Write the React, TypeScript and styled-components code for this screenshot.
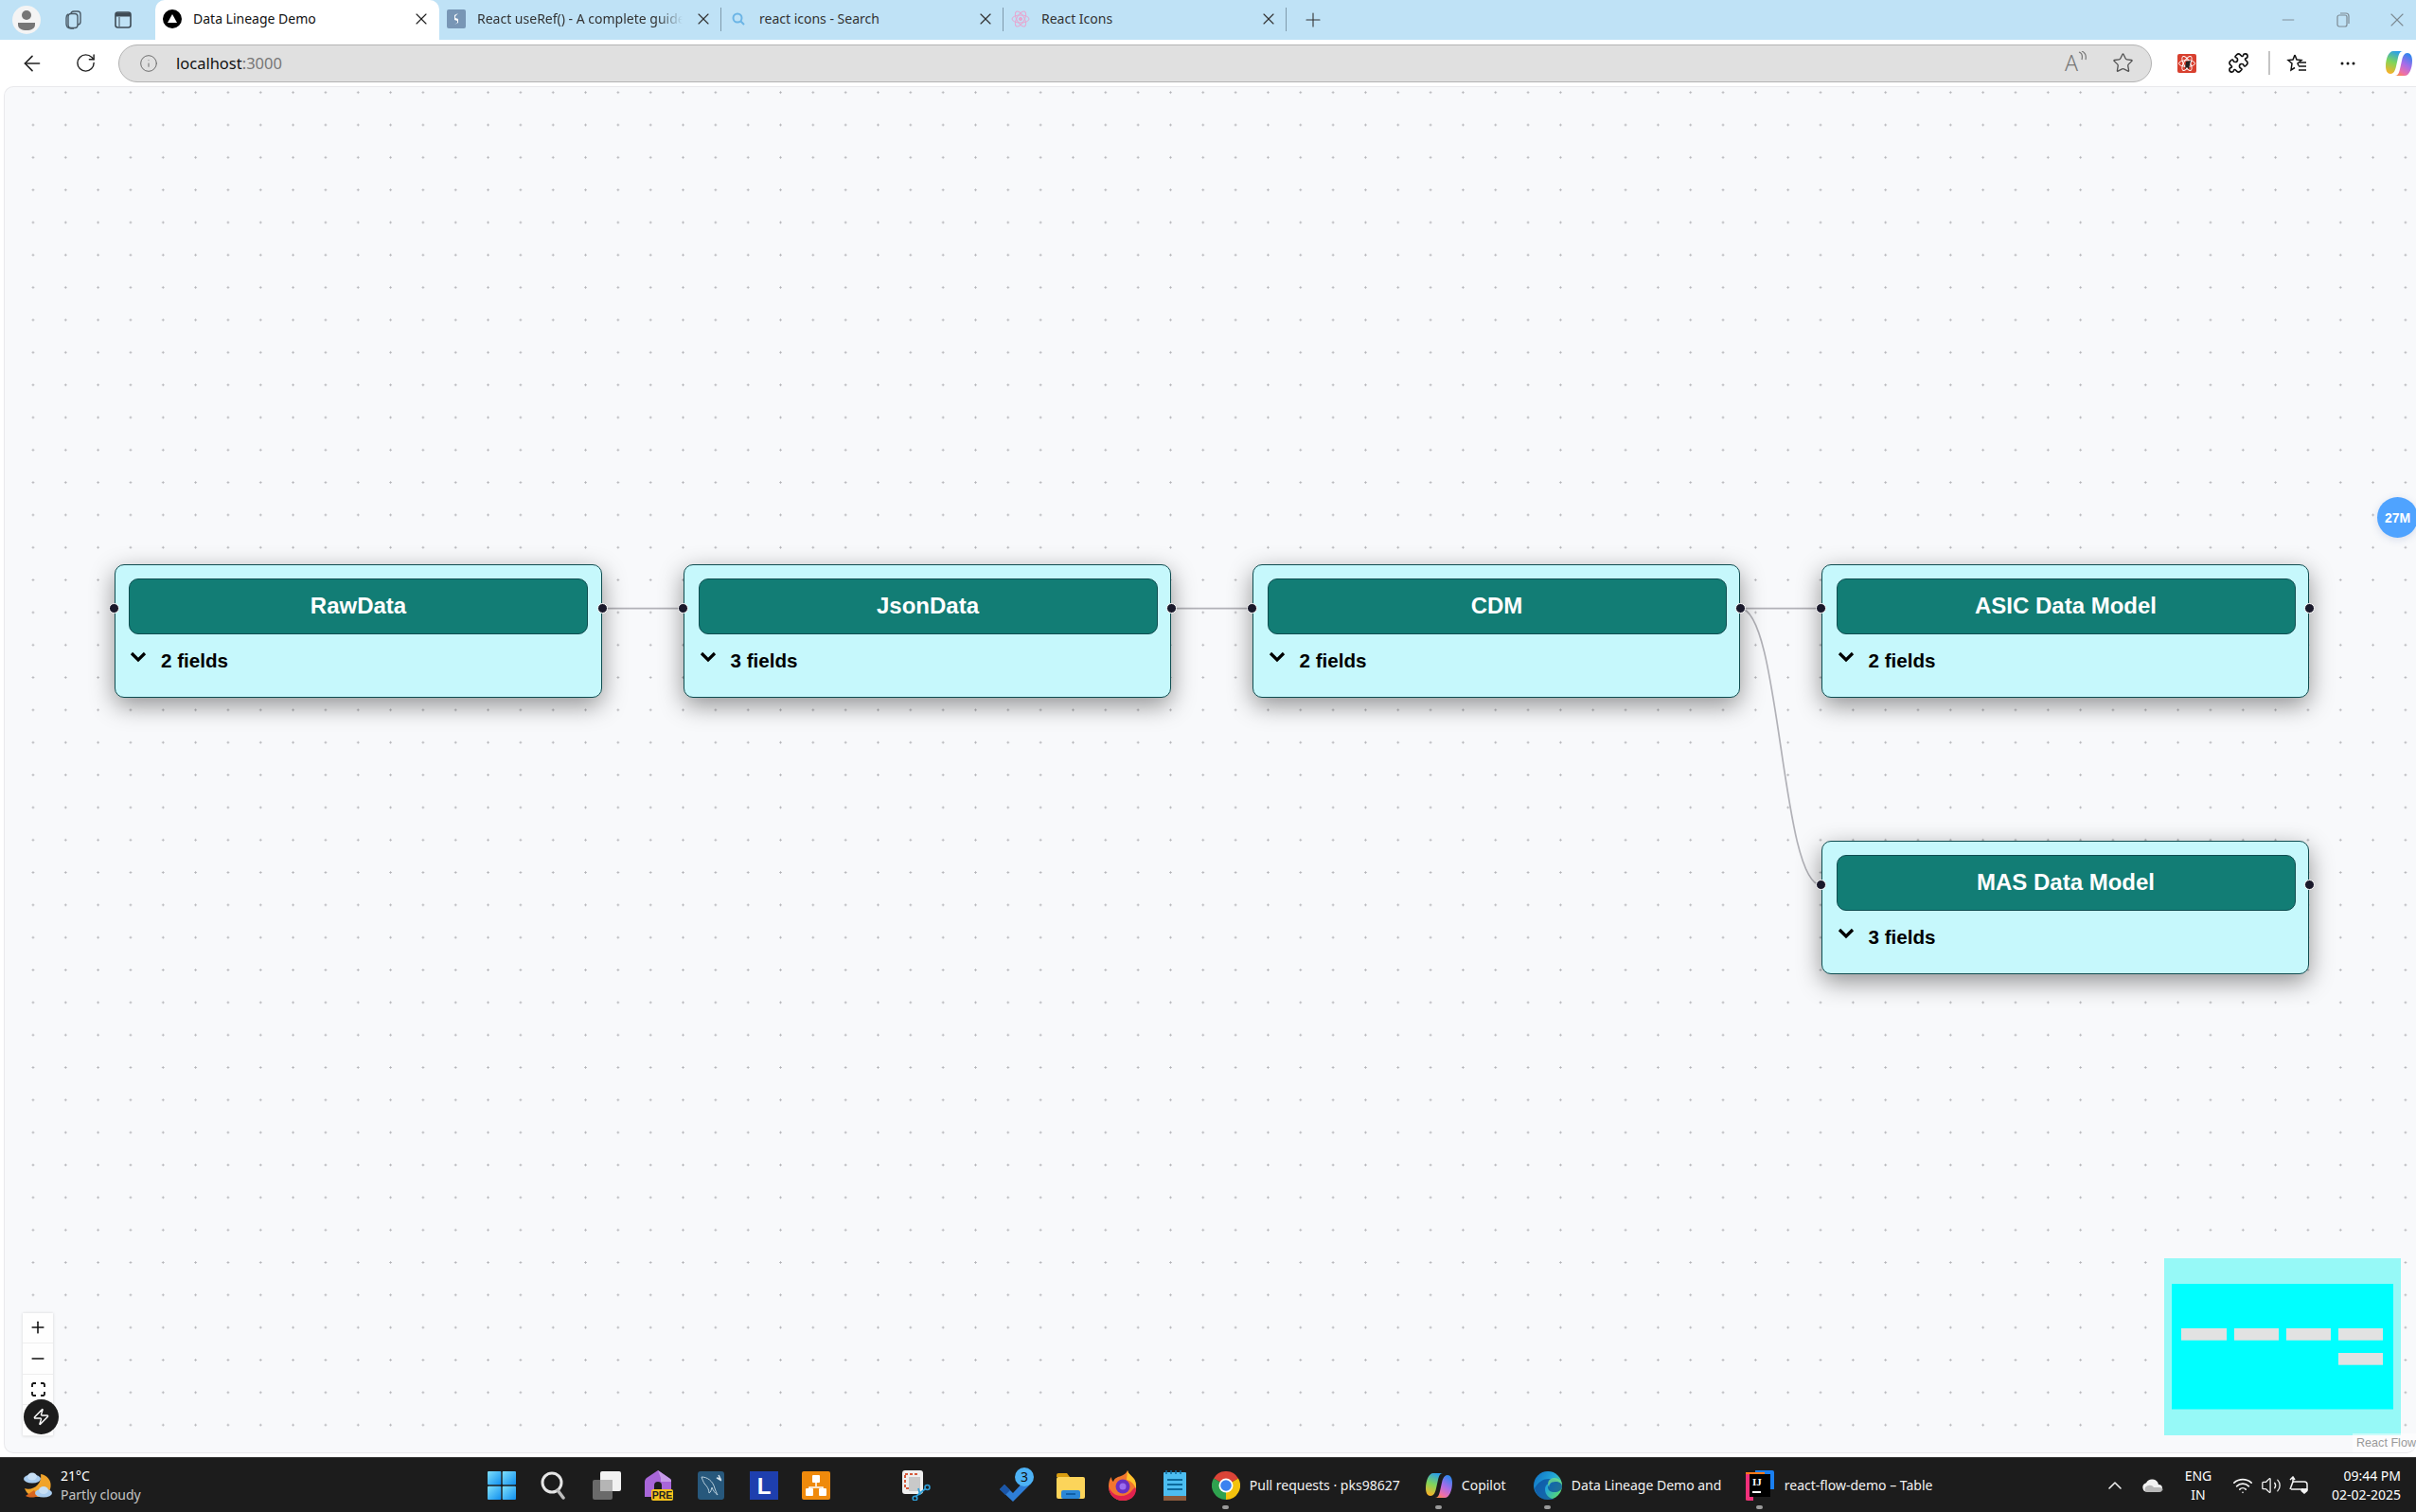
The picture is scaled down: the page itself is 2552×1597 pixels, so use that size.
import styled, { createGlobalStyle } from 'styled-components'
import { ArrowLeft, RotateCw, Info, X, Plus, Minus, Star, Zap, ChevronUp, Wifi, Volume2, Puzzle } from 'lucide-react'

const GlobalStyle = createGlobalStyle`
  html, body { margin: 0; padding: 0; background: #fff; }
  body { font-family: "Noto Sans", "Open Sans", sans-serif; }
`

const Page = styled.div`
  width: 2552px;
  height: 1597px;
  overflow: hidden;
  display: flex;
  flex-direction: column;
  background: #fff;
`

const TabStrip = styled.div`
  height: 42px;
  flex: none;
  display: flex;
  align-items: stretch;
  background: #bfe2f6;
  color: #333;
`

const StripIcons = styled.div`
  width: 164px;
  flex: none;
  display: grid;
  grid-template-columns: 30px 68px 38px;
  align-items: center;
  justify-items: center;
  padding-left: 13px;
  box-sizing: border-box;
`

const Avatar = styled.div`
  width: 30px;
  height: 30px;
  border-radius: 50%;
  background: #f4f4f4;
  display: flex;
  align-items: center;
  justify-content: center;
`

const Tab = styled.div<{ $active?: boolean; $w: number }>`
  width: ${(p) => p.$w}px;
  flex: none;
  box-sizing: border-box;
  display: flex;
  align-items: center;
  gap: 12px;
  padding: 0 9px 3px 8px;
  position: relative;
  font-size: 14px;
  color: ${(p) => (p.$active ? '#111' : '#333')};
  background: ${(p) => (p.$active ? '#fff' : 'transparent')};
  border-radius: ${(p) => (p.$active ? '10px 10px 0 0' : '0')};
`

const TabDivider = styled.span`
  position: absolute;
  right: 0;
  top: 8px;
  bottom: 9px;
  width: 1px;
  background: #7f9aab;
`

const TabIcon = styled.span`
  width: 20px;
  height: 20px;
  flex: none;
  display: flex;
  align-items: center;
  justify-content: center;
`

const TabTitle = styled.span<{ $fade?: boolean }>`
  flex: 1;
  min-width: 0;
  overflow: hidden;
  white-space: nowrap;
  ${(p) => p.$fade && 'mask-image: linear-gradient(to right, #000 88%, transparent 100%);'}
`

const NewTab = styled.div`
  width: 56px;
  flex: none;
  display: flex;
  align-items: center;
  justify-content: center;
`

const WindowButtons = styled.div`
  margin-left: auto;
  display: flex;
  align-items: center;
  gap: 17.5px;
  color: #7d8a93;
`

const WindowButton = styled.div`
  width: 40px;
  display: flex;
  justify-content: center;
`

const Toolbar = styled.div`
  height: 49px;
  flex: none;
  display: flex;
  align-items: center;
  padding: 0 0 0 14px;
  box-sizing: border-box;
  background: #fff;
  color: #222;
`

const NavGroup = styled.div`
  display: flex;
  align-items: center;
  gap: 16px;
`

const ToolButton = styled.div`
  width: 40px;
  height: 40px;
  flex: none;
  display: flex;
  align-items: center;
  justify-content: center;
`

const AddressBar = styled.div`
  margin-left: 15px;
  margin-right: 19px;
  width: 2148px;
  height: 40px;
  flex: none;
  box-sizing: border-box;
  display: flex;
  align-items: center;
  border: 1.5px solid #b3b3b3;
  border-radius: 20px;
  background: #e0e0e0;
  padding: 0 18px 0 21px;
  color: #6f6f6f;
`

const Url = styled.span`
  margin-left: 19px;
  font-size: 16.5px;
  color: #777;
  b {
    font-weight: 400;
    color: #111;
  }
`

const AddressEnd = styled.div`
  margin-left: auto;
  display: flex;
  align-items: center;
  gap: 26px;
`

const ReadAloud = styled.span`
  width: 24px;
  font-size: 23px;
  font-weight: 300;
  line-height: 1;
  color: #777;
  position: relative;
  svg {
    position: absolute;
    right: 0;
    top: -1px;
  }
`

const ToolCluster = styled.div`
  display: flex;
  align-items: center;
  gap: 18px;
`

const ToolSlot = styled.div`
  width: 36px;
  height: 36px;
  display: flex;
  align-items: center;
  justify-content: center;
`

const ToolSeparator = styled.div`
  width: 2px;
  height: 25px;
  background: #c4c4c4;
  margin: 0 -8px 0 -4px;
`

const Canvas = styled.div`
  flex: 1;
  position: relative;
  margin: 0 0 4px 4px;
  overflow: hidden;
  border-radius: 10px 0 10px 10px;
  border: 1px solid #e9e9ec;
  border-right: none;
  box-sizing: border-box;
  background-color: #f8f9fb;
  background-image: radial-gradient(circle, #b2b2b6 0.9px, transparent 1.3px);
  background-size: 34.33px 34.33px;
  background-position: 12.8px -11.5px;
`

const EdgeLayer = styled.svg`
  position: absolute;
  left: -1px;
  top: -1px;
  width: 2548px;
  height: 1444px;
  pointer-events: none;
`

const FlowNode = styled.div<{ $x: number; $y: number }>`
  position: absolute;
  left: ${(p) => p.$x}px;
  top: ${(p) => p.$y}px;
  width: 515px;
  height: 141px;
  box-sizing: border-box;
  padding: 13.5px 13.5px 13.5px 14.5px;
  background: #c6f8fc;
  border: 1.7px solid #0f4c50;
  border-radius: 10px;
  box-shadow: 0 8px 26px rgba(0, 0, 0, 0.42);
`

const NodeHeader = styled.div`
  height: 59px;
  box-sizing: border-box;
  display: flex;
  align-items: center;
  justify-content: center;
  background: #127d75;
  border: 1.7px solid #0f4c50;
  border-radius: 10px;
  color: #fff;
  font: 700 24px "Liberation Sans", Arial, sans-serif;
`

const FieldsRow = styled.div`
  display: flex;
  align-items: center;
  gap: 15px;
  margin-top: 15px;
  padding-left: 1px;
  color: #000;
  font: 700 20.6px/26px "Liberation Sans", Arial, sans-serif;
  svg {
    margin-top: -7px;
  }
`

const Handle = styled.span<{ $side: 'left' | 'right' }>`
  position: absolute;
  top: 40px;
  ${(p) => p.$side}: -7px;
  width: 11px;
  height: 11px;
  box-sizing: border-box;
  border-radius: 50%;
  background: #1a192b;
  border: 1.5px solid #fff;
`

const Controls = styled.div`
  position: absolute;
  left: 19px;
  bottom: 17px;
  width: 32px;
  display: flex;
  flex-direction: column;
  background: #fefefe;
  box-shadow: 0 0 3px rgba(0, 0, 0, 0.15);
`

const ControlButton = styled.div`
  height: 32.6px;
  box-sizing: border-box;
  display: flex;
  align-items: center;
  justify-content: center;
  border-bottom: 1px solid #eee;
  color: #111;
`

const DevButton = styled.div`
  position: absolute;
  left: 19.5px;
  bottom: 19.5px;
  width: 37px;
  height: 37px;
  border-radius: 50%;
  background: #1c1c1c;
  box-shadow: 0 0 0 1px rgba(255, 255, 255, 0.2);
  color: #fff;
  display: flex;
  align-items: center;
  justify-content: center;
`

const MiniMap = styled.svg`
  position: absolute;
  right: 16px;
  bottom: 18px;
  width: 250px;
  height: 187px;
`

const Attribution = styled.div`
  position: absolute;
  right: 0;
  bottom: 0;
  height: 20px;
  padding: 0 0 0 4px;
  background: rgba(255, 255, 255, 0.5);
  color: #999;
  font: 12.6px/20px "Liberation Sans", Arial, sans-serif;
`

const Badge = styled.div`
  position: absolute;
  right: -2px;
  top: 433px;
  width: 43px;
  height: 43px;
  border-radius: 50%;
  background: #4fa3ff;
  color: #fff;
  display: flex;
  align-items: center;
  justify-content: center;
  font: 700 14px "Liberation Sans", Arial, sans-serif;
  box-shadow: 0 2px 8px rgba(60, 90, 160, 0.18);
`

const Taskbar = styled.div`
  height: 58px;
  flex: none;
  display: flex;
  align-items: center;
  background: #1c1c1c;
  color: #fff;
  border-top: 1px solid #333;
  box-sizing: border-box;
`

const Weather = styled.div`
  width: 502.5px;
  flex: none;
  box-sizing: border-box;
  padding-left: 24px;
  display: flex;
  align-items: center;
  gap: 8px;
`

const WeatherText = styled.div`
  font-size: 14px;
  line-height: 20px;
  span {
    display: block;
    color: #c4c4c4;
  }
`

const Slot = styled.div`
  width: 55.3px;
  height: 40px;
  flex: none;
  position: relative;
  display: flex;
  align-items: center;
  justify-content: center;
`

const SlotGap = styled.div<{ $w: number }>`
  width: ${(p) => p.$w}px;
  flex: none;
`

const RunningApp = styled.div<{ $gap: number; $lead: number; $label: number }>`
  display: flex;
  align-items: center;
  flex: none;
  margin-left: ${(p) => p.$lead}px;
  gap: ${(p) => p.$gap}px;
  span {
    width: ${(p) => p.$label}px;
    overflow: hidden;
    white-space: nowrap;
    font-size: 14px;
    color: #f2f2f2;
  }
`

const AppIcon = styled.div`
  width: 30px;
  height: 40px;
  position: relative;
  display: flex;
  align-items: center;
  justify-content: center;
`

const Running = styled.i`
  position: absolute;
  left: 50%;
  bottom: -5px;
  width: 7px;
  height: 4px;
  margin-left: -3.5px;
  border-radius: 2px;
  background: #9a9a9a;
`

const Tray = styled.div`
  margin-left: auto;
  padding-right: 16px;
  display: flex;
  align-items: center;
`

const Lang = styled.div`
  width: 50px;
  margin-left: 12px;
  text-align: center;
  font-size: 14px;
  line-height: 20px;
`

const TrayIcons = styled.div`
  margin-left: 11px;
  display: flex;
  align-items: center;
  gap: 7.5px;
`

const Clock = styled.div`
  width: 90px;
  margin-left: 7px;
  text-align: right;
  font-size: 14px;
  line-height: 20px;
  white-space: nowrap;
`

const Chevron = () => (
  <svg width="18" height="12" viewBox="0 0 18 12">
    <path d="M2 2l7 7 7-7" fill="none" stroke="#000" strokeWidth="3.2" />
  </svg>
)

const nodes = [
  { id: 'raw', title: 'RawData', fields: 2, x: 115.5, y: 504 },
  { id: 'json', title: 'JsonData', fields: 3, x: 717, y: 504 },
  { id: 'cdm', title: 'CDM', fields: 2, x: 1318, y: 504 },
  { id: 'asic', title: 'ASIC Data Model', fields: 2, x: 1919, y: 504 },
  { id: 'mas', title: 'MAS Data Model', fields: 3, x: 1919, y: 796 },
]

const Logo = {
  Next: () => (
    <svg width="20" height="20" viewBox="0 0 20 20">
      <circle cx="10" cy="10" r="10" fill="#000" />
      <path d="M10 5l5 9H5z" fill="#fff" />
    </svg>
  ),
  Log: () => (
    <svg width="20" height="20" viewBox="0 0 20 20">
      <rect width="20" height="20" rx="2" fill="#7896b5" />
      <path d="M12 4L8 6v5l3 1v2l-3 2 4-2V10L9 9V7z" fill="#fff" />
    </svg>
  ),
  Atom: () => (
    <svg width="20" height="22" viewBox="0 0 20 22" fill="none" stroke="#e7a6d0" strokeWidth="1">
      <ellipse cx="10" cy="11" rx="9" ry="4" />
      <ellipse cx="10" cy="11" rx="9" ry="4" transform="rotate(60 10 11)" />
      <ellipse cx="10" cy="11" rx="9" ry="4" transform="rotate(120 10 11)" />
      <circle cx="10" cy="11" r="1.6" fill="#e7a6d0" />
    </svg>
  ),
  Mag: () => (
    <svg width="16" height="16" viewBox="0 0 16 16" fill="none" stroke="#6cb5e6" strokeWidth="2">
      <circle cx="7" cy="7" r="4.5" />
      <path d="M10.5 10.5L14 14" />
    </svg>
  ),
  Person: () => (
    <svg width="20" height="24" viewBox="0 0 20 24" fill="#767676">
      <circle cx="10" cy="7" r="5" />
      <path d="M1 15h18v2c0 4-4 6-9 6s-9-2-9-6z" />
    </svg>
  ),
  Collections: () => (
    <svg width="22" height="22" viewBox="0 0 22 22" fill="none" stroke="#4a5a66" strokeWidth="1.4">
      <rect x="9" y="2" width="10" height="14" rx="3" />
      <path d="M6 5c-2 1-2 2-2 4v6c0 3 2 5 5 5h3" />
      <rect x="6" y="4.5" width="10" height="15" rx="3" fill="#bfe2f6" />
    </svg>
  ),
  Sidebar: () => (
    <svg width="20" height="20" viewBox="0 0 20 20" fill="none" stroke="#3e4b55" strokeWidth="1.6">
      <rect x="2" y="2" width="16" height="16" rx="2.5" />
      <path d="M2 4.500h16" strokeWidth="4" />
      <path d="M6 7v10" strokeWidth="1" />
    </svg>
  ),
  Restore: () => (
    <svg width="14" height="16" viewBox="0 0 14 16" fill="none" stroke="#7d8a93" strokeWidth="1.2">
      <rect x="1" y="3" width="10" height="12" rx="2" />
      <path d="M4 1h6a3 3 0 0 1 3 3v8" />
    </svg>
  ),
  ExtRed: () => (
    <svg width="20" height="20" viewBox="0 0 20 20">
      <rect width="20" height="20" rx="2" fill="#d8402f" />
      <g fill="none" stroke="#fff" strokeWidth="0.9">
        <ellipse cx="10" cy="10" rx="8.5" ry="3.4" />
        <ellipse cx="10" cy="10" rx="8.5" ry="3.4" transform="rotate(60 10 10)" />
        <ellipse cx="10" cy="10" rx="8.5" ry="3.4" transform="rotate(120 10 10)" />
      </g>
      <path d="M9 8l5-1-2 9-2-2-2 2z" fill="#222" />
    </svg>
  ),
  FavList: () => (
    <svg width="22" height="22" viewBox="0 0 22 22" fill="none" stroke="#111" strokeWidth="1.5">
      <path d="M9 2l2 5 5 .5-4 3.5 1 2.5M9 2L7 7l-5 .5 4 3.5-1 7 4-2.5" />
      <path d="M14 10h7M13 14h8M13 18h8" />
    </svg>
  ),
  Copilot: ({ s = 28, id = 'tb' }: { s?: number; id?: string }) => (
    <svg width={s} height={s} viewBox="0 0 28 28">
      <defs>
        <linearGradient id={`${id}a`} x1="0.6" y1="0" x2="0.3" y2="1">
          <stop offset="0" stopColor="#2a9fea" />
          <stop offset="0.5" stopColor="#7fd65a" />
          <stop offset="1" stopColor="#f9b128" />
        </linearGradient>
        <linearGradient id={`${id}b`} x1="0.7" y1="0" x2="0.2" y2="1">
          <stop offset="0" stopColor="#2f86ee" />
          <stop offset="0.45" stopColor="#a86ce8" />
          <stop offset="0.8" stopColor="#ee6fa8" />
          <stop offset="1" stopColor="#f58a4e" />
        </linearGradient>
      </defs>
      <path d="M8 1h10c-3 0-4 3-5 7l-2 9c-1 5-3 8-6 8-3 0-5-3-5-8C0 9 3 1 8 1z" fill={`url(#${id}a)`} />
      <path d="M20 27H10c3 0 4-3 5-7l2-9c1-5 3-8 6-8 3 0 5 3 5 8 0 8-3 16-8 16z" fill={`url(#${id}b)`} />
    </svg>
  ),
  WeatherIcon: () => (
    <svg width="32" height="30" viewBox="0 0 32 30">
      <path d="M19 3a12 12 0 0 1-3 24C9 27 4 24 2 18c8 3 19-4 17-15z" fill="#f0a32a" />
      <path d="M3 26c4 2 9 2 13 0l-4-6z" fill="#d9661f" />
      <ellipse cx="10" cy="8" rx="9" ry="4.500" fill="#a9cdf0" />
      <ellipse cx="10" cy="5.500" rx="5" ry="4" fill="#c7dff5" />
      <ellipse cx="22" cy="23" rx="9" ry="4.500" fill="#a9cdf0" />
      <ellipse cx="22" cy="20" rx="5" ry="4" fill="#c7dff5" />
    </svg>
  ),
  Windows: () => (
    <svg width="30" height="30" viewBox="0 0 30 30">
      <defs>
        <linearGradient id="win" x1="0" y1="0" x2="1" y2="1">
          <stop offset="0" stopColor="#7fe0fb" />
          <stop offset="1" stopColor="#0f8fef" />
        </linearGradient>
      </defs>
      <rect x="0" y="0" width="14.300" height="14.300" rx="1" fill="url(#win)" />
      <rect x="15.700" y="0" width="14.300" height="14.300" rx="1" fill="url(#win)" />
      <rect x="0" y="15.700" width="14.300" height="14.300" rx="1" fill="url(#win)" />
      <rect x="15.700" y="15.700" width="14.300" height="14.300" rx="1" fill="url(#win)" />
    </svg>
  ),
  SearchBar: () => (
    <svg width="28" height="30" viewBox="0 0 28 30" fill="none">
      <circle cx="12" cy="12" r="10" stroke="#e6e6e6" strokeWidth="3" />
      <path d="M18 20l6 8" stroke="#bdbdbd" strokeWidth="3.500" strokeLinecap="round" />
    </svg>
  ),
  TaskView: () => (
    <svg width="30" height="30" viewBox="0 0 30 30">
      <rect x="0" y="9" width="21" height="21" rx="2" fill="#6a6a6a" />
      <rect x="8" y="0" width="22" height="21" rx="2" fill="#f2f2f2" />
      <rect x="8" y="9" width="13" height="12" fill="#b5b5b5" />
    </svg>
  ),
  Pre: () => (
    <svg width="30" height="32" viewBox="0 0 30 32">
      <path d="M14 0l13 9c1 1 1 2 1 3v16H0V12c0-2 1-3 2-4z" fill="#a866d8" />
      <path d="M14 0l13 9c1 1 1 2 1 3H17V8z" fill="#c79be8" />
      <path d="M10 22v-6a4 4 0 0 1 8 0v6z" fill="#1c1c1c" />
      <rect x="7" y="20" width="23" height="12" rx="2" fill="#f6c21c" />
      <text x="18.500" y="30" textAnchor="middle" fontSize="10.500" fontWeight="700" fontFamily="Liberation Sans" fill="#222">PRE</text>
    </svg>
  ),
  Workbench: () => (
    <svg width="28" height="30" viewBox="0 0 28 30">
      <rect width="28" height="30" rx="3" fill="#27587c" />
      <path d="M4 6c6 0 12 4 14 12 1 3 2 5 3 7-3-2-5-5-6-8-1 3-1 5-3 6 0-4-2-7-5-10-1-2-2-4-3-7z" fill="none" stroke="#b9cfdc" strokeWidth="1" />
      <path d="M22 4l2 4-4-1 5 3" fill="none" stroke="#d8e5ee" strokeWidth="1.400" />
    </svg>
  ),
  LApp: () => (
    <svg width="30" height="30" viewBox="0 0 30 30">
      <rect width="30" height="30" fill="#1e3fae" />
      <text x="15" y="24" textAnchor="middle" fontSize="24" fontWeight="700" fontFamily="Liberation Sans" fill="#fff">L</text>
    </svg>
  ),
  Drawio: () => (
    <svg width="30" height="30" viewBox="0 0 30 30">
      <rect width="30" height="30" rx="2" fill="#ef8a0c" />
      <path d="M15 10v6M8 21v-4h14v4" fill="none" stroke="#fff" strokeWidth="1.500" />
      <rect x="11" y="4" width="8" height="8" rx="1" fill="#fff" />
      <rect x="4" y="18" width="8" height="8" rx="1" fill="#fff" />
      <rect x="18" y="18" width="8" height="8" rx="1" fill="#fff" />
    </svg>
  ),
  Snip: () => (
    <svg width="32" height="32" viewBox="0 0 32 32">
      <rect x="2" y="0" width="22" height="25" rx="3" fill="#efefef" />
      <rect x="5" y="4" width="12" height="15" fill="none" stroke="#d65a3c" strokeWidth="2" strokeDasharray="3 2" />
      <rect x="9" y="7" width="12" height="15" fill="#c9c9c9" />
      <path d="M27 19L16 28" stroke="#2f9fd8" strokeWidth="1.800" />
      <path d="M19 19l2 7" stroke="#2f9fd8" strokeWidth="1.800" />
      <circle cx="28.500" cy="18" r="2.500" fill="none" stroke="#2f9fd8" strokeWidth="1.600" />
      <circle cx="15.500" cy="29.500" r="2.300" fill="none" stroke="#2f9fd8" strokeWidth="1.600" />
    </svg>
  ),
  Todo: () => (
    <svg width="38" height="38" viewBox="0 0 38 38">
      <path d="M0 23l5-5 9 9 14-15 5 5-19 19z" fill="#2e7ed8" />
      <path d="M0 23l5-5 6 6-5 5z" fill="#1b56a8" />
      <circle cx="26" cy="10" r="10" fill="#4db2f5" />
      <text x="26" y="15" textAnchor="middle" fontSize="14" fontFamily="Noto Sans" fill="#111">3</text>
    </svg>
  ),
  Folder: () => (
    <svg width="30" height="28" viewBox="0 0 30 28">
      <path d="M0 3a2 2 0 0 1 2-2h9l3 4H0z" fill="#d99d10" />
      <rect x="0" y="5" width="30" height="23" rx="2" fill="#fcd45a" />
      <rect x="5" y="19" width="20" height="9" rx="2" fill="#2b87d8" />
      <rect x="10" y="22" width="10" height="2" fill="#0f5fa8" />
    </svg>
  ),
  Firefox: () => (
    <svg width="30" height="32" viewBox="0 0 30 32">
      <path d="M20 0c1 5 6 6 8 11 3 8 0 21-13 21C6 32 0 25 0 17 0 13 1 9 3 7c0 3 1 4 2 5 1-4 5-5 8-6 3-1 6-3 7-6z" fill="#f2762e" />
      <path d="M20 0c1 5 6 6 8 11 1 3 1 6 1 8-3-6-6-8-10-9z" fill="#ffc52c" />
      <path d="M15 32C6 32 0 25 0 17c2 6 7 10 13 10 5 0 9-2 12-6 3-3 3-4 4 0-1 7-6 11-14 11z" fill="#e0224e" />
      <circle cx="15" cy="17" r="7.500" fill="#6a2fc2" />
      <circle cx="15" cy="17" r="3.500" fill="#9b6cf0" />
    </svg>
  ),
  Notepad: () => (
    <svg width="24" height="32" viewBox="0 0 24 32">
      <rect y="2" width="24" height="27" rx="1" fill="#4cbdf0" />
      <rect y="27" width="24" height="5" fill="#8a5a3c" />
      <path d="M4 10h16M4 15h16M4 20h16" stroke="#0d6a9c" strokeWidth="2" />
      <path d="M3 0v4M8 0v4M13 0v4M18 0v4" stroke="#0d6a9c" strokeWidth="1.500" />
    </svg>
  ),
  Chrome: () => (
    <svg width="30" height="30" viewBox="0 0 30 30">
      <path d="M15 15L2 7.500A15 15 0 0 1 28 7.500z" fill="#db4437" />
      <path d="M15 15L28 7.500A15 15 0 0 1 15 30z" fill="#f4c20d" />
      <path d="M15 15L15 30A15 15 0 0 1 2 7.500z" fill="#2fa24f" />
      <circle cx="15" cy="15" r="7.500" fill="#fff" />
      <circle cx="15" cy="15" r="5.800" fill="#3b82f0" />
    </svg>
  ),
  Edge: () => (
    <svg width="30" height="30" viewBox="0 0 30 30">
      <defs>
        <linearGradient id="edgeg" x1="0" y1="0" x2="1" y2="0.600">
          <stop offset="0" stopColor="#0f6cc4" />
          <stop offset="0.600" stopColor="#22a7d8" />
          <stop offset="1" stopColor="#55d67a" />
        </linearGradient>
      </defs>
      <circle cx="15" cy="15" r="15" fill="url(#edgeg)" />
      <path d="M30 16c0 4-4 6-8 6-4 0-7-2-7-5 0-2 2-4 4-4-3-1-7 1-7 6 0 6 5 11 11 10-3 1-7 2-11 1C7 29 2 24 1 18c4-7 9-10 15-10 8 0 14 3 14 8z" fill="#0e4f9e" opacity="0.75" />
      <path d="M30 15c0-2-3-4-7-4-5 0-8 3-6 6-4-4-1-10 5-10 4 0 8 3 8 8z" fill="#6fe08e" opacity="0.8" />
    </svg>
  ),
  Idea: () => (
    <svg width="30" height="32" viewBox="0 0 30 32">
      <path d="M10 0h18a2 2 0 0 1 2 2v18H10z" fill="#1a7ff0" />
      <path d="M0 2h20v24H4l-4 6z" fill="#ff7a1a" />
      <path d="M0 4h8v28H2a2 2 0 0 1-2-2z" fill="#f0307a" />
      <rect x="4" y="4" width="22" height="24" fill="#000" />
      <text x="7" y="16" fontSize="11" fontWeight="700" fontFamily="Liberation Serif" fill="#fff">IJ</text>
      <rect x="7" y="22" width="9" height="2" fill="#fff" />
    </svg>
  ),
  Cloud: () => (
    <svg width="22" height="14" viewBox="0 0 22 14">
      <path d="M5 14a5 5 0 0 1-1-9.800 7 7 0 0 1 13 1.800 4 4 0 0 1 0 8z" fill="#f2f2f2" />
      <path d="M3 9c3-3 7-3 9 0l6 0c2 0 3 1 4 2-1 2-2 3-4 3H5c-2 0-3-2-2-5z" fill="#9f9f9f" opacity="0.7" />
    </svg>
  ),
  Battery: () => (
    <svg width="22" height="20" viewBox="0 0 22 20" fill="none" stroke="#f4f4f4" strokeWidth="1.500">
      <path d="M5 6h12a3 3 0 0 1 3 3v5H3" />
      <path d="M2 14l3-8" />
      <path d="M5 1v6M2 4l3-3 2 3" />
      <path d="M17 19l-3.500-3a2 2 0 0 1 3.500-2 2 2 0 0 1 3.500 2z" fill="#f4f4f4" stroke="none" />
    </svg>
  ),
}

const FitIcon = () => (
  <svg width="15" height="15" viewBox="0 0 15 15" fill="none" stroke="#111" strokeWidth="1.8">
    <path d="M1 5V2.500A1.500 1.500 0 0 1 2.500 1H5M10 1h2.500A1.500 1.500 0 0 1 14 2.500V5M14 10v2.500a1.500 1.500 0 0 1-1.500 1.500H10M5 14H2.500A1.500 1.500 0 0 1 1 12.500V10" />
  </svg>
)

export default function App() {
  return (
    <Page>
      <GlobalStyle />
      <TabStrip>
        <StripIcons>
          <Avatar>
            <Logo.Person />
          </Avatar>
          <Logo.Collections />
          <Logo.Sidebar />
        </StripIcons>
        <Tab $active $w={300}>
          <TabIcon><Logo.Next /></TabIcon>
          <TabTitle>Data Lineage Demo</TabTitle>
          <X size={20} strokeWidth={1.4} color="#222" />
        </Tab>
        <Tab $w={298}>
          <TabIcon><Logo.Log /></TabIcon>
          <TabTitle $fade>React useRef() - A complete guide</TabTitle>
          <X size={20} strokeWidth={1.4} color="#333" />
          <TabDivider />
        </Tab>
        <Tab $w={298}>
          <TabIcon><Logo.Mag /></TabIcon>
          <TabTitle>react icons - Search</TabTitle>
          <X size={20} strokeWidth={1.4} color="#333" />
          <TabDivider />
        </Tab>
        <Tab $w={299}>
          <TabIcon><Logo.Atom /></TabIcon>
          <TabTitle>React Icons</TabTitle>
          <X size={20} strokeWidth={1.4} color="#333" />
          <TabDivider />
        </Tab>
        <NewTab><Plus size={24} strokeWidth={1.1} color="#333" /></NewTab>
        <WindowButtons>
          <WindowButton><Minus size={20} strokeWidth={1.1} /></WindowButton>
          <WindowButton><Logo.Restore /></WindowButton>
          <WindowButton><X size={24} strokeWidth={1.1} /></WindowButton>
        </WindowButtons>
      </TabStrip>
      <Toolbar>
        <NavGroup>
          <ToolButton><ArrowLeft size={26} strokeWidth={1.5} /></ToolButton>
          <ToolButton><RotateCw size={23} strokeWidth={1.5} /></ToolButton>
        </NavGroup>
        <AddressBar>
          <Info size={20} strokeWidth={1.2} />
          <Url><b>localhost</b>:3000</Url>
          <AddressEnd>
            <ReadAloud>
              A
              <svg width="10" height="12" viewBox="0 0 10 12" fill="none" stroke="#777" strokeWidth="1.2">
                <path d="M1 1c3 1 4 4 3 8M4 0c4 2 5 5 4 9" />
              </svg>
            </ReadAloud>
            <Star size={23} strokeWidth={1.4} color="#555" />
          </AddressEnd>
        </AddressBar>
        <ToolCluster>
          <ToolSlot><Logo.ExtRed /></ToolSlot>
          <ToolSlot><Puzzle size={23} strokeWidth={1.7} color="#111" /></ToolSlot>
          <ToolSeparator />
          <ToolSlot><Logo.FavList /></ToolSlot>
          <ToolSlot>
            <svg width="16" height="4" viewBox="0 0 16 4" fill="#111">
              <circle cx="2" cy="2" r="1.500" /><circle cx="8" cy="2" r="1.500" /><circle cx="14" cy="2" r="1.500" />
            </svg>
          </ToolSlot>
          <ToolSlot><Logo.Copilot /></ToolSlot>
        </ToolCluster>
      </Toolbar>
      <Canvas>
        <EdgeLayer viewBox="4 91 2548 1444">
          <g fill="none" stroke="#b1b1b7" strokeWidth="1.7">
            <path d="M636 642.700L723 642.700" />
            <path d="M1237 642.700L1324 642.700" />
            <path d="M1838 642.700L1924 642.700" />
            <path d="M1838 642.700C1881 642.700 1881 935 1924 935" />
          </g>
        </EdgeLayer>
        {nodes.map((n) => (
          <FlowNode key={n.id} $x={n.x} $y={n.y}>
            <Handle $side="left" />
            <NodeHeader>{n.title}</NodeHeader>
            <FieldsRow>
              <Chevron />
              {n.fields} fields
            </FieldsRow>
            <Handle $side="right" />
          </FlowNode>
        ))}
        <Controls>
          <ControlButton><Plus size={20} strokeWidth={1.9} /></ControlButton>
          <ControlButton><Minus size={20} strokeWidth={1.9} /></ControlButton>
          <ControlButton><FitIcon /></ControlButton>
          <ControlButton />
        </Controls>
        <DevButton><Zap size={19} strokeWidth={1.8} /></DevButton>
        <MiniMap viewBox="0 0 250 187">
          <rect width="250" height="187" fill="#96f9f7" />
          <rect x="8" y="27" width="234" height="132.500" fill="#00ffff" />
          <g fill="#e2e2e2">
            <rect x="18" y="74" width="48" height="12.700" />
            <rect x="74" y="74" width="47" height="12.700" />
            <rect x="129" y="74" width="47" height="12.700" />
            <rect x="184" y="74" width="47" height="12.700" />
            <rect x="184" y="100" width="47" height="12.700" />
          </g>
        </MiniMap>
        <Attribution>React Flow</Attribution>
        <Badge>27M</Badge>
      </Canvas>
      <Taskbar>
        <Weather>
          <Logo.WeatherIcon />
          <WeatherText>
            21°C
            <span>Partly cloudy</span>
          </WeatherText>
        </Weather>
        <Slot><Logo.Windows /></Slot>
        <Slot><Logo.SearchBar /></Slot>
        <Slot><Logo.TaskView /></Slot>
        <Slot><Logo.Pre /></Slot>
        <Slot><Logo.Workbench /></Slot>
        <Slot><Logo.LApp /></Slot>
        <Slot><Logo.Drawio /></Slot>
        <SlotGap $w={49.75} />
        <Slot><Logo.Snip /></Slot>
        <SlotGap $w={53} />
        <Slot><Logo.Todo /></Slot>
        <Slot><Logo.Folder /></Slot>
        <Slot><Logo.Firefox /></Slot>
        <Slot><Logo.Notepad /></Slot>
        <RunningApp $lead={11} $gap={10} $label={160}>
          <AppIcon><Logo.Chrome /><Running /></AppIcon>
          <span>Pull requests · pks98627</span>
        </RunningApp>
        <RunningApp $lead={25} $gap={9} $label={50}>
          <AppIcon><Logo.Copilot s={28} id="bar" /><Running /></AppIcon>
          <span>Copilot</span>
        </RunningApp>
        <RunningApp $lead={26} $gap={10} $label={160}>
          <AppIcon><Logo.Edge /><Running /></AppIcon>
          <span>Data Lineage Demo and</span>
        </RunningApp>
        <RunningApp $lead={24} $gap={11} $label={159}>
          <AppIcon><Logo.Idea /><Running /></AppIcon>
          <span>react-flow-demo – Table</span>
        </RunningApp>
        <Tray>
          <ChevronUp size={24} strokeWidth={1.6} color="#eee" />
          <SlotGap $w={17} />
          <Logo.Cloud />
          <Lang>ENG<br />IN</Lang>
          <TrayIcons>
            <Wifi size={22} strokeWidth={1.8} color="#f4f4f4" />
            <Volume2 size={22} strokeWidth={1.4} color="#f4f4f4" />
            <Logo.Battery />
          </TrayIcons>
          <Clock>09:44 PM<br />02-02-2025</Clock>
        </Tray>
      </Taskbar>
    </Page>
  )
}
